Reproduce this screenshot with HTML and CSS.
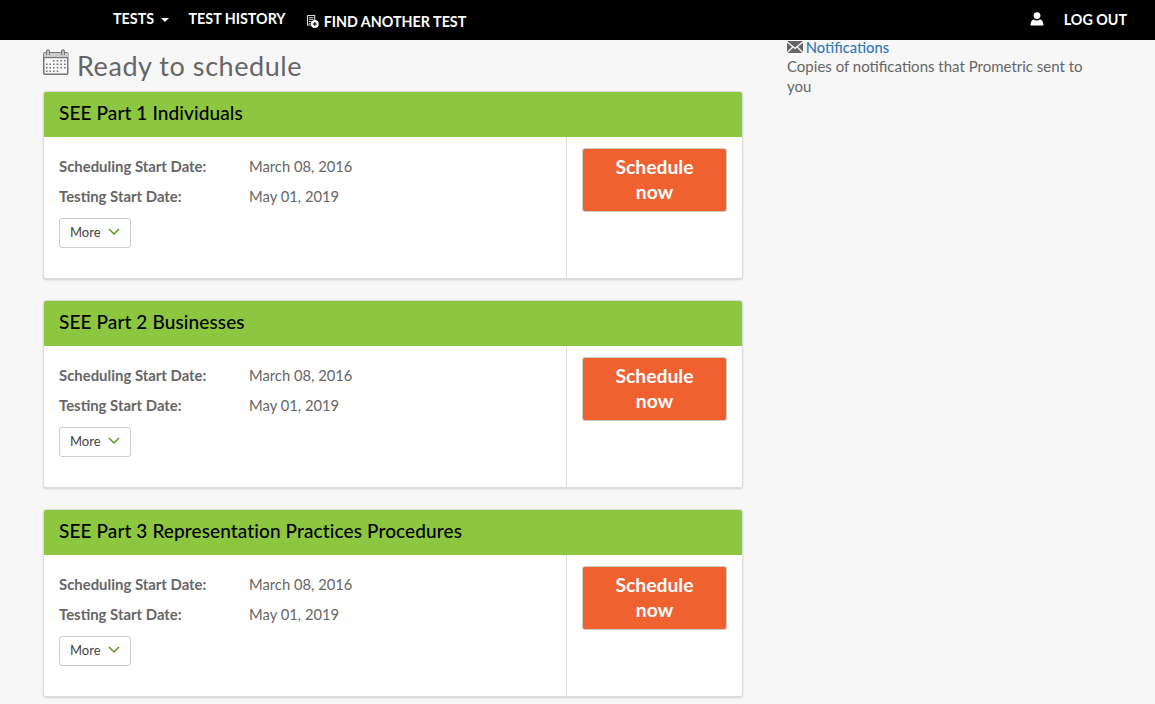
FILE: index.html
```html
<!DOCTYPE html>
<html lang="en">
<head>
<meta charset="utf-8">
<title>Ready to schedule</title>
<link rel="stylesheet" href="styles.css">
</head>
<body>
<nav class="topbar">
  <ul class="nav-left">
    <li class="nav-item nav-tests">TESTS <span class="caret"></span></li>
    <li class="nav-item nav-history">TEST HISTORY</li>
    <li class="nav-item nav-find">
      <svg class="find-icon" viewBox="0 0 14 14" width="13" height="13" aria-hidden="true">
        <path fill="none" stroke="#ddd" stroke-width="1.200" d="M1.600 .6h7.800v5M1.600 .6v10.200h3.400"/>
        <path fill="#ddd" d="M3 2.500h5v1H3zM3 4.500h5v1H3zM3 6.500h3v1H3zM3 8.500h2v1H3z"/>
        <circle cx="9.500" cy="9.700" r="4.200" fill="#fff"/>
        <path fill="#000" d="M7.300 9.100h4.400v1.200H7.300zM8.900 7.500h1.200v4.400H8.900z"/>
      </svg>
      <span>FIND ANOTHER TEST</span>
    </li>
  </ul>
  <div class="nav-right">
    <svg class="user-icon" viewBox="0 0 14 14" width="14" height="14" aria-hidden="true">
      <circle cx="7" cy="3.600" r="3.400" fill="#fff"/>
      <path fill="#fff" d="M0.500 13.500c0-4 2-6 3.500-6 1 .7 2 1 3 1s2-.3 3-1c1.500 0 3.500 2 3.500 6z"/>
    </svg>
    <span class="logout">LOG OUT</span>
  </div>
</nav>
<div class="page">
  <main class="main-col">
    <h1 class="page-title">
      <svg class="cal-icon" viewBox="0 0 26 26" width="26" height="26" aria-hidden="true">
        <rect x=".75" y="3.750" width="24" height="21.500" rx="1" fill="#f7f7f7" stroke="#777" stroke-width="1.500"/>
        <rect x="1" y="4" width="24" height="4.500" fill="#ccc"/>
        <path fill="#777" d="M1 8h24v1.200H1z"/>
        <path fill="#f7f7f7" stroke="#777" stroke-width="1.400" d="M3.700 6V2.200a1.300 1.300 0 0 1 2.600-.0V6M18.700 6V2.200a1.300 1.300 0 0 1 2.600-.0V6"/>
        <path fill="#777" d="M10 11h1.600v1.600H10zM13.700 11h1.600v1.600h-1.600zM17.400 11H19v1.600h-1.600zM21 11h1.600v1.600H21zM3 14.500h1.600v1.600H3zM6.400 14.500H8v1.600H6.400zM10 14.500h1.600v1.600H10zM13.700 14.500h1.600v1.600h-1.600zM17.400 14.500H19v1.600h-1.600zM21 14.500h1.600v1.600H21zM3 18h1.600v1.600H3zM6.400 18H8v1.600H6.400zM10 18h1.600v1.600H10zM13.700 18h1.600v1.600h-1.600zM17.400 18H19v1.600h-1.600zM21 18h1.600v1.600H21zM3 21.400h1.600V23H3zM6.400 21.400H8V23H6.400zM10 21.400h1.600V23H10zM13.700 21.400h1.600V23h-1.600z"/>
      </svg>
      <span>Ready to schedule</span>
    </h1>

    <section class="card">
      <header class="card-head">SEE Part 1 Individuals</header>
      <div class="card-body">
        <div class="card-info">
          <div class="info-row"><span class="info-label">Scheduling Start Date:</span><span class="info-value">March 08, 2016</span></div>
          <div class="info-row"><span class="info-label">Testing Start Date:</span><span class="info-value">May 01, 2019</span></div>
          <button class="more-btn" type="button">More
            <svg class="chev" viewBox="0 0 12 8" width="12" height="8" aria-hidden="true"><path d="M1 1l5 5 5-5" fill="none" stroke="#5a9a1e" stroke-width="1.500"/></svg>
          </button>
        </div>
        <div class="card-action"><button class="sched-btn" type="button">Schedule now</button></div>
      </div>
    </section>

    <section class="card">
      <header class="card-head">SEE Part 2 Businesses</header>
      <div class="card-body">
        <div class="card-info">
          <div class="info-row"><span class="info-label">Scheduling Start Date:</span><span class="info-value">March 08, 2016</span></div>
          <div class="info-row"><span class="info-label">Testing Start Date:</span><span class="info-value">May 01, 2019</span></div>
          <button class="more-btn" type="button">More
            <svg class="chev" viewBox="0 0 12 8" width="12" height="8" aria-hidden="true"><path d="M1 1l5 5 5-5" fill="none" stroke="#5a9a1e" stroke-width="1.500"/></svg>
          </button>
        </div>
        <div class="card-action"><button class="sched-btn" type="button">Schedule now</button></div>
      </div>
    </section>

    <section class="card">
      <header class="card-head">SEE Part 3 Representation Practices Procedures</header>
      <div class="card-body">
        <div class="card-info">
          <div class="info-row"><span class="info-label">Scheduling Start Date:</span><span class="info-value">March 08, 2016</span></div>
          <div class="info-row"><span class="info-label">Testing Start Date:</span><span class="info-value">May 01, 2019</span></div>
          <button class="more-btn" type="button">More
            <svg class="chev" viewBox="0 0 12 8" width="12" height="8" aria-hidden="true"><path d="M1 1l5 5 5-5" fill="none" stroke="#5a9a1e" stroke-width="1.500"/></svg>
          </button>
        </div>
        <div class="card-action"><button class="sched-btn" type="button">Schedule now</button></div>
      </div>
    </section>
  </main>
  <aside class="side-col">
    <div class="side-link">
      <svg class="mail-icon" viewBox="0 0 16 12" width="16" height="12" aria-hidden="true">
        <path fill="#666" d="M0 0h16L8 6.500zM0 1.800V11l5-5.200zM16 1.800V11l-5-5.200zM.8 12l5.200-5.300 2 1.600 2-1.600 5.200 5.300z"/>
      </svg>
      <a class="side-anchor" href="#">Notifications</a>
    </div>
    <p class="side-text">Copies of notifications that Prometric sent to you</p>
  </aside>
</div>
</body>
</html>
```
FILE: styles.css
```css
* { box-sizing: border-box; }
html, body { margin: 0; padding: 0; }
body {
  background: #f7f7f7;
  font-family: "Lato", "Open Sans", sans-serif;
  color: #666;
  height: 704px;
  overflow: hidden;
}
.topbar {
  height: 40px;
  background: #000;
  color: #fff;
  display: flex;
  justify-content: space-between;
  padding: 0 28px 0 113px;
  font-size: 14.3px;
  font-weight: 700;
}
.nav-left {
  list-style: none;
  margin: 0;
  padding: 0;
  display: flex;
  gap: 20px;
}
.nav-item { line-height: 38px; white-space: nowrap; }
.nav-find { line-height: 43px; display: flex; align-items: center; gap: 5px; height: 43px; }
.find-icon { display: block; }
.caret {
  display: inline-block;
  width: 0;
  height: 0;
  margin-left: 3px;
  vertical-align: 2px;
  border-top: 4px solid #fff;
  border-left: 4px solid transparent;
  border-right: 4px solid transparent;
}
.nav-right { display: flex; align-items: center; gap: 20px; padding-bottom: 2px; }
.main-col { width: 700px; }
.page { display: flex; padding-left: 43px; }
.page-title {
  margin: 0;
  height: 51px;
  display: flex;
  align-items: flex-start;
  gap: 8px;
  font-size: 27px;
  font-weight: 400;
  color: #666;
  line-height: 52px;
  letter-spacing: .56px;
}
.cal-icon { margin-top: 9px; }
.card {
  height: 188px;
  margin-bottom: 21px;
  background: #fff;
  border: 1px solid #ddd;
  border-radius: 3px;
  box-shadow: 0 1px 2px rgba(0,0,0,.15);
  overflow: hidden;
}
.card-head {
  height: 45px;
  background: #8dc63f;
  color: #000;
  font-size: 19px;
  font-weight: 500;
  line-height: 42px;
  letter-spacing: .11px;
  padding-left: 15px;
}
.card-body { display: flex; height: 141px; }
.card-info { width: 523px; padding: 15px 15px 0 15px; border-right: 1px solid #ddd; }
.info-row { display: flex; height: 30px; font-size: 14.9px; line-height: 29px; }
.info-label { width: 190px; font-weight: 700; color: #666; }
.info-value { color: #666; font-size: 14.75px; }
.more-btn {
  display: flex;
  align-items: center;
  gap: 7px;
  width: 72px;
  height: 30px;
  margin: 6px 0 0;
  padding: 0 0 3px 10px;
  background: #fff;
  border: 1px solid #ccc;
  border-radius: 3px;
  font: 400 13px "Lato", sans-serif;
  color: #444;
}
.card-action { flex: 1; padding: 11px 15px 0 15px; }
.sched-btn {
  display: block;
  width: 145px;
  height: 64px;
  padding: 0 20px 3px;
  background: #f06130;
  border: 1px solid #ccc;
  border-radius: 3px;
  color: #fff;
  font: 700 19.3px/25px "Lato", sans-serif;
}
.side-col { width: 310px; margin-left: 44px; }
.side-link { height: 14px; font-size: 14.7px; line-height: 14px; white-space: nowrap; }
.mail-icon { margin-right: -1px; }
.side-anchor { color: #337ab7; text-decoration: none; font-weight: 500; }
.side-text { margin: 2px 0 0; font-size: 15px; line-height: 20px; color: #666; width: 300px; }
```
